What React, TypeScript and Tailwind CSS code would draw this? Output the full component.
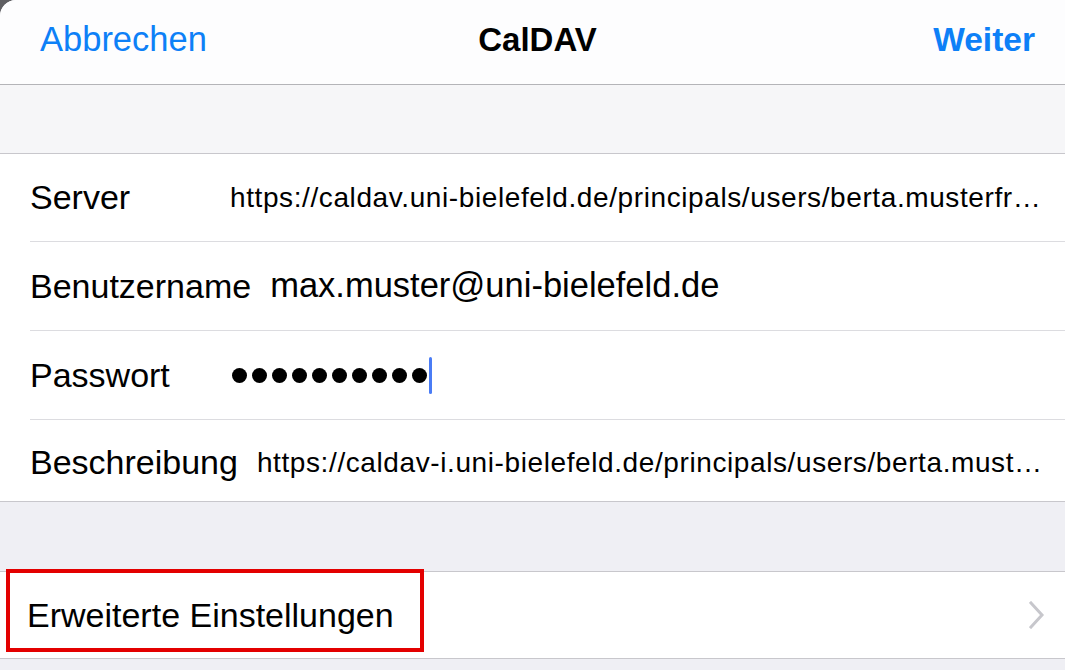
const font = { fontFamily: '"Liberation Sans", Arial, sans-serif' };

const rows = [
  {
    label: "Server",
    value: "https://caldav.uni-bielefeld.de/principals/users/berta.musterfr…",
    small: true,
    h: "h-[88px]",
  },
  { label: "Benutzername", value: "max.muster@uni-bielefeld.de", small: false, h: "h-[89px]" },
  { label: "Passwort", value: "", password: true, h: "h-[89px]" },
  {
    label: "Beschreibung",
    value: "https://caldav-i.uni-bielefeld.de/principals/users/berta.must…",
    small: true,
    h: "h-[81px]",
  },
];

function Chevron() {
  return (
    <svg width="16" height="28" viewBox="0 0 16 28" fill="none">
      <path d="M2 2 L13 14 L2 26" stroke="#c7c7cc" strokeWidth="3" strokeLinecap="square" />
    </svg>
  );
}

export default function App() {
  return (
    <div className="w-[1065px] h-[670px] overflow-hidden bg-[#5f5f62]" style={font}>
      <div className="h-full bg-[#efeff4] rounded-tl-[16px] overflow-hidden flex flex-col">
        {/* Nav bar */}
        <header className="h-[85px] shrink-0 bg-[#fdfdfe] border-b border-[#b4b4b8] grid grid-cols-3 items-center pl-10 pr-[30px] pb-1">
          <span className="text-[34.5px] text-[#0d80f7]">Abbrechen</span>
          <span className="text-[33px] font-bold text-black text-center">CalDAV</span>
          <span className="text-[33.5px] font-bold text-[#0d80f7] text-right">Weiter</span>
        </header>

        <div className="h-[69px] shrink-0 bg-[#f6f6f8] border-b border-[#c8c7cc]" />

        {/* Account fields */}
        <section className="bg-white border-b border-[#c8c7cc]">
          {rows.map((r, i) => (
            <div key={r.label} className="pl-[30px]">
              <div
                className={`flex items-center gap-[19px] pr-[20px] ${r.h} ${
                  i < rows.length - 1 ? "border-b border-[#dcdce0]" : "pt-1"
                }`}
              >
                <span className="min-w-[181px] text-[34px] text-black whitespace-nowrap">{r.label}</span>
                {r.password ? (
                  <div className="flex items-center">
                    <div className="flex gap-[5px] ml-[2px]">
                      {Array.from({ length: 10 }).map((_, k) => (
                        <div key={k} className="w-[15px] h-[15px] rounded-full bg-black" />
                      ))}
                    </div>
                    <div className="w-[3px] h-[37px] bg-[#4a7cf5] rounded-sm ml-[2px]" />
                  </div>
                ) : (
                  <span
                    className={`whitespace-nowrap text-black ${
                      r.small ? "text-[28px] tracking-[0.6px]" : "text-[34.5px]"
                    }`}
                  >
                    {r.value}
                  </span>
                )}
              </div>
            </div>
          ))}
        </section>

        <div className="h-[70px] shrink-0 border-b border-[#c8c7cc]" />

        {/* Advanced settings */}
        <section className="relative h-[87px] shrink-0 bg-white border-b border-[#c8c7cc] flex items-center justify-between pl-[27px] pr-[20px]">
          <span className="text-[34px] text-black">Erweiterte Einstellungen</span>
          <Chevron />
          <div className="absolute left-[6px] top-[-3px] w-[418px] h-[83px] border-4 border-[#e30000]" />
        </section>
      </div>
    </div>
  );
}
